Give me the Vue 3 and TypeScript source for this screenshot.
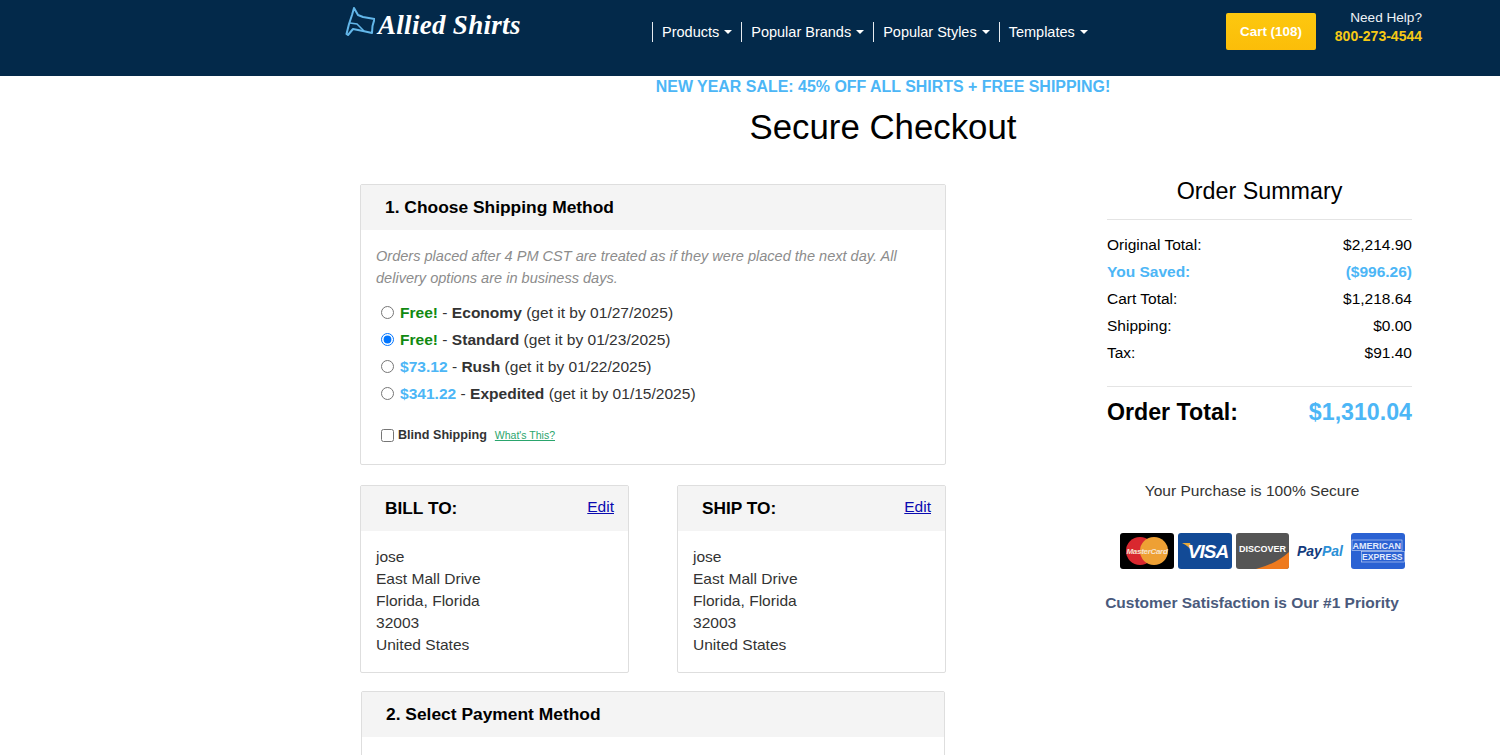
<script setup lang="ts">
interface NavItem {
  label: string;
}

interface ShippingOption {
  id: string;
  price: string;
  free: boolean;
  name: string;
  date: string;
}

interface SummaryRow {
  label: string;
  value: string;
  saved?: boolean;
}

const navItems: NavItem[] = [
  { label: 'Products' },
  { label: 'Popular Brands' },
  { label: 'Popular Styles' },
  { label: 'Templates' },
];

const shippingOptions: ShippingOption[] = [
  { id: 'economy', price: 'Free!', free: true, name: 'Economy', date: '01/27/2025' },
  { id: 'standard', price: 'Free!', free: true, name: 'Standard', date: '01/23/2025' },
  { id: 'rush', price: '$73.12', free: false, name: 'Rush', date: '01/22/2025' },
  { id: 'expedited', price: '$341.22', free: false, name: 'Expedited', date: '01/15/2025' },
];

const summaryRows: SummaryRow[] = [
  { label: 'Original Total:', value: '$2,214.90' },
  { label: 'You Saved:', value: '($996.26)', saved: true },
  { label: 'Cart Total:', value: '$1,218.64' },
  { label: 'Shipping:', value: '$0.00' },
  { label: 'Tax:', value: '$91.40' },
];

const addressLines: string[] = ['jose', 'East Mall Drive', 'Florida, Florida', '32003', 'United States'];
</script>

<template>
  <header class="header">
    <a class="logo" href="#">
      <svg class="logo-mark" width="30" height="32" viewBox="0 0 30 32" fill="none">
        <path
          d="M9 1 L13 8 L18 10 L29.5 12 L27.5 19 L27 26 L18 24 L8 22 L3 28 L1.5 27 L4 17 L7 8 Z"
          stroke="#63b7ea"
          stroke-width="2"
          stroke-linejoin="round"
        />
        <path d="M5 16 L12 17 L19 24" stroke="#63b7ea" stroke-width="1.5" />
      </svg>
      <span class="logo-text">Allied Shirts</span>
    </a>
    <nav class="nav">
      <a v-for="item in navItems" :key="item.label" class="nav-item" href="#">
        {{ item.label }}<span class="caret"></span>
      </a>
    </nav>
    <a class="cart" href="#">Cart (108)</a>
    <div class="help">
      <span class="help-label">Need Help?</span>
      <span class="help-phone">800-273-4544</span>
    </div>
  </header>

  <div class="heading">
    <p class="sale">NEW YEAR SALE: 45% OFF ALL SHIRTS + FREE SHIPPING!</p>
    <h1 class="title">Secure Checkout</h1>
  </div>

  <main class="layout">
    <div class="left">
      <section class="panel">
        <h2 class="panel-head">1. Choose Shipping Method</h2>
        <div class="shipping-body">
          <p class="note">
            Orders placed after 4 PM CST are treated as if they were placed the next day. All delivery options are in
            business days.
          </p>
          <label v-for="option in shippingOptions" :key="option.id" class="ship-option">
            <input type="radio" name="shipping" :checked="option.id === 'standard'" />
            <span>
              <b :class="option.free ? 'free' : 'price'">{{ option.price }}</b> - <b>{{ option.name }}</b> (get it by
              {{ option.date }})
            </span>
          </label>
          <div class="blind">
            <label class="blind-label"><input type="checkbox" /><b>Blind Shipping</b></label>
            <a class="whats" href="#">What's This?</a>
          </div>
        </div>
      </section>

      <div class="addresses">
        <section class="panel address">
          <div class="panel-head address-head">
            <h2 class="address-title">BILL TO:</h2>
            <a class="edit" href="#">Edit</a>
          </div>
          <div class="address-body">
            <div v-for="line in addressLines" :key="line">{{ line }}</div>
          </div>
        </section>
        <section class="panel address">
          <div class="panel-head address-head">
            <h2 class="address-title">SHIP TO:</h2>
            <a class="edit" href="#">Edit</a>
          </div>
          <div class="address-body">
            <div v-for="line in addressLines" :key="line">{{ line }}</div>
          </div>
        </section>
      </div>

      <section class="panel payment">
        <h2 class="panel-head">2. Select Payment Method</h2>
        <div class="payment-body"></div>
      </section>
    </div>

    <aside class="summary">
      <h2 class="summary-title">Order Summary</h2>
      <div class="summary-rows">
        <div v-for="row in summaryRows" :key="row.label" class="summary-row" :class="{ saved: row.saved }">
          <span>{{ row.label }}</span>
          <span>{{ row.value }}</span>
        </div>
      </div>
      <div class="order-total">
        <span>Order Total:</span>
        <span class="order-value">$1,310.04</span>
      </div>
      <p class="secure">Your Purchase is 100% Secure</p>
      <div class="cards">
        <svg width="54" height="36" viewBox="0 0 54 36">
          <rect width="54" height="36" rx="3" fill="#000" />
          <circle cx="20" cy="18" r="14" fill="#d9282f" />
          <circle cx="34" cy="18" r="14" fill="#eea034" />
          <text x="27" y="21" text-anchor="middle" class="mc-text">MasterCard</text>
        </svg>
        <svg width="54" height="36" viewBox="0 0 54 36">
          <rect width="54" height="36" rx="3" fill="#124a96" />
          <path d="M4 10 L12 10 L15 20 Q11 13 4 10 Z" fill="#e8a93a" />
          <text x="30" y="25" text-anchor="middle" class="visa-text">VISA</text>
        </svg>
        <svg width="53" height="36" viewBox="0 0 53 36">
          <rect width="53" height="36" rx="3" fill="#555" />
          <path d="M20 36 Q40 31 53 19 L53 33 Q53 36 50 36 Z" fill="#ee7a1e" />
          <text x="26.5" y="18.5" text-anchor="middle" class="disc-text">DISCOVER</text>
        </svg>
        <svg width="54" height="36" viewBox="0 0 54 36">
          <text x="4" y="22.5" class="pp-text"><tspan fill="#123a7c">Pay</tspan><tspan fill="#2b8fd6">Pal</tspan></text>
        </svg>
        <svg width="54" height="36" viewBox="0 0 54 36">
          <rect width="54" height="36" rx="3" fill="#2b62d3" />
          <rect x="1" y="7" width="50" height="10.5" fill="none" stroke="#cfdcf7" stroke-width="0.6" />
          <rect x="10.5" y="18.5" width="43" height="10.5" fill="none" stroke="#cfdcf7" stroke-width="0.6" />
          <text x="1.5" y="15.8" class="amex-text">AMERICAN</text>
          <text x="11" y="27.3" class="amex-text express">EXPRESS</text>
        </svg>
      </div>
      <p class="priority">Customer Satisfaction is Our #1 Priority</p>
    </aside>
  </main>
</template>

<style>
html,
body {
  margin: 0;
  height: 755px;
  overflow: hidden;
  background: #fff;
}
</style>

<style scoped>
.header {
  display: flex;
  align-items: flex-start;
  height: 76px;
  padding-left: 345px;
  box-sizing: border-box;
  background: #03294a;
  font-family: 'Liberation Sans', Arial, sans-serif;
}

.logo {
  display: flex;
  align-items: center;
  gap: 3px;
  width: 307px;
  height: 32px;
  margin-top: 7px;
  text-decoration: none;
}

.logo-text {
  margin-top: 5px;
  color: #fff;
  font-family: 'Liberation Serif', serif;
  font-size: 27px;
  font-style: italic;
  font-weight: 700;
  letter-spacing: 0.3px;
  white-space: nowrap;
}

.nav {
  display: flex;
  width: 574px;
  margin-top: 22px;
}

.nav-item {
  display: flex;
  align-items: center;
  height: 20px;
  padding: 0 9px;
  border-left: 1px solid #e6ebf0;
  color: #fff;
  font-size: 14.5px;
  text-decoration: none;
  white-space: nowrap;
}

.caret {
  width: 0;
  height: 0;
  margin-left: 5px;
  border-top: 4px solid #fff;
  border-right: 4px solid transparent;
  border-left: 4px solid transparent;
}

.cart {
  display: flex;
  align-items: center;
  justify-content: center;
  width: 90px;
  height: 37px;
  margin-top: 13px;
  border-radius: 2px;
  background: linear-gradient(#fdc80f, #fbbd09);
  color: #fff;
  font-size: 13.4px;
  font-weight: 700;
  text-decoration: none;
}

.help {
  display: flex;
  flex-direction: column;
  align-items: flex-end;
  width: 106px;
  margin-top: 8px;
  font-size: 14px;
  line-height: 19px;
}

.help-label {
  color: #eef2f6;
  font-size: 13.6px;
}

.help-phone {
  color: #f6c915;
  font-weight: 700;
}

.heading {
  padding-left: 266px;
  text-align: center;
  font-family: 'Liberation Sans', Arial, sans-serif;
}

.sale {
  margin: 0;
  padding-top: 2px;
  color: #4cb6f6;
  font-size: 15.95px;
  font-weight: 700;
  line-height: 18px;
}

.title {
  margin: 0;
  padding-top: 10px;
  color: #000;
  font-size: 34.8px;
  font-weight: 400;
  line-height: 42px;
}

.layout {
  display: flex;
  align-items: flex-start;
  gap: 161px;
  padding: 36px 0 0 360px;
  font-family: 'Liberation Sans', Arial, sans-serif;
}

.left {
  display: flex;
  flex-direction: column;
  width: 586px;
  flex-shrink: 0;
}

.panel {
  box-sizing: border-box;
  border: 1px solid #dedede;
  border-radius: 2px;
  background: #fff;
}

.panel-head {
  display: flex;
  align-items: center;
  box-sizing: border-box;
  height: 45px;
  margin: 0;
  padding: 0 0 1px 24px;
  background: #f4f4f4;
  color: #000;
  font-size: 17.4px;
  font-weight: 700;
}

.shipping-body {
  height: 234px;
  padding: 15px 15px 0;
  box-sizing: border-box;
}

.note {
  margin: 0 0 10px;
  color: #8c8c8c;
  font-size: 14.55px;
  font-style: italic;
  line-height: 22px;
}

.ship-option {
  display: flex;
  align-items: center;
  height: 27px;
  color: #333;
  font-size: 15.55px;
}

.ship-option input {
  width: 13px;
  height: 13px;
  margin: 0 6px 0 5px;
}

.free {
  color: #118a11;
}

.price {
  color: #4cb6f6;
}

.blind {
  display: flex;
  align-items: center;
  margin-top: 21px;
}

.blind-label {
  display: flex;
  align-items: center;
  color: #333;
  font-size: 12.6px;
}

.blind-label input {
  width: 13px;
  height: 13px;
  margin: 0 4px 0 5px;
}

.whats {
  margin-left: 8px;
  color: #2aa56d;
  font-size: 10.5px;
}

.addresses {
  display: flex;
  justify-content: space-between;
  margin-top: 20px;
}

.address {
  width: 269px;
  height: 188px;
}

.address-head {
  justify-content: space-between;
  padding-right: 14px;
}

.address-title {
  margin: 0;
  font-size: 17.3px;
  font-weight: 700;
}

.edit {
  margin-top: -3px;
  color: #0a0ab0;
  font-size: 15.5px;
  font-weight: 400;
}

.address-body {
  padding: 14.6px 15px 0;
  color: #333;
  font-size: 15.55px;
  line-height: 22.1px;
}

.payment {
  width: 584px;
  margin: 18px 0 0 1px;
}

.payment-body {
  height: 120px;
}

.summary {
  width: 305px;
  flex-shrink: 0;
  margin-top: -10px;
}

.summary-title {
  margin: 0;
  padding: 0 0 11px 0;
  border-bottom: 1px solid #e4e4e4;
  color: #000;
  font-size: 23.3px;
  font-weight: 400;
  line-height: 34px;
  text-align: center;
}

.summary-rows {
  padding: 11px 0 20px;
  border-bottom: 1px solid #e4e4e4;
}

.summary-row {
  display: flex;
  justify-content: space-between;
  height: 27px;
  color: #000;
  font-size: 15.5px;
  line-height: 27px;
}

.summary-row.saved {
  color: #4cb6f6;
  font-weight: 700;
}

.order-total {
  display: flex;
  justify-content: space-between;
  align-items: center;
  height: 50px;
  color: #000;
  font-size: 23.2px;
  font-weight: 700;
}

.order-value {
  color: #4cb6f6;
}

.secure {
  margin: 44px 0 0 -15px;
  color: #333;
  font-size: 15.55px;
  line-height: 20px;
  text-align: center;
}

.cards {
  display: flex;
  align-items: center;
  justify-content: space-between;
  width: 285px;
  margin: 32px 0 0 13px;
}

.mc-text {
  fill: #f6e4d0;
  font-family: 'Liberation Sans', Arial, sans-serif;
  font-size: 8px;
  font-style: italic;
  font-weight: 700;
  letter-spacing: -0.3px;
}

.visa-text {
  fill: #fff;
  font-family: 'Liberation Sans', Arial, sans-serif;
  font-size: 19px;
  font-style: italic;
  font-weight: 700;
  letter-spacing: -1px;
}

.disc-text {
  fill: #fff;
  font-family: 'Liberation Sans', Arial, sans-serif;
  font-size: 9px;
  font-weight: 700;
}

.pp-text {
  font-family: 'Liberation Sans', Arial, sans-serif;
  font-size: 14px;
  font-style: italic;
  font-weight: 700;
}

.amex-text {
  fill: #e4ebfb;
  font-family: 'Liberation Sans', Arial, sans-serif;
  font-size: 9px;
  font-weight: 700;
}

.amex-text.express {
  font-size: 8.6px;
}

.priority {
  margin: 24px 0 0 -15px;
  color: #4a5a7c;
  font-size: 15.5px;
  font-weight: 700;
  line-height: 20px;
  text-align: center;
  white-space: nowrap;
}
</style>
